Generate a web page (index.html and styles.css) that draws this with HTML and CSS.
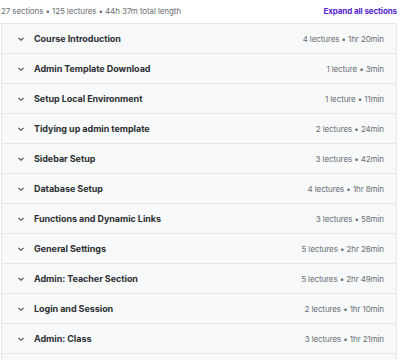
FILE: index.html
```html
<!DOCTYPE html>
<html>
<head>
<meta charset="utf-8">
<link rel="stylesheet" href="styles.css">
</head>
<body>
<div class="page">
  <div class="top">
    <span class="summary">27 sections • 125 lectures • 44h 37m total length</span>
    <span class="expand">Expand all sections</span>
  </div>
  <div class="list">
    <div class="row"><span class="chev"><svg width="8" height="6" viewBox="0 0 8 6"><path d="M1.5 1.8 L4 4.3 L6.5 1.8" fill="none" stroke="#3e4143" stroke-width="1.1"/></svg></span><span class="title">Course Introduction</span><span class="meta">4 lectures • 1hr 20min</span></div>
    <div class="row"><span class="chev"><svg width="8" height="6" viewBox="0 0 8 6"><path d="M1.5 1.8 L4 4.3 L6.5 1.8" fill="none" stroke="#3e4143" stroke-width="1.1"/></svg></span><span class="title">Admin Template Download</span><span class="meta">1 lecture • 3min</span></div>
    <div class="row"><span class="chev"><svg width="8" height="6" viewBox="0 0 8 6"><path d="M1.5 1.8 L4 4.3 L6.5 1.8" fill="none" stroke="#3e4143" stroke-width="1.1"/></svg></span><span class="title">Setup Local Environment</span><span class="meta">1 lecture • 11min</span></div>
    <div class="row"><span class="chev"><svg width="8" height="6" viewBox="0 0 8 6"><path d="M1.5 1.8 L4 4.3 L6.5 1.8" fill="none" stroke="#3e4143" stroke-width="1.1"/></svg></span><span class="title">Tidying up admin template</span><span class="meta">2 lectures • 24min</span></div>
    <div class="row"><span class="chev"><svg width="8" height="6" viewBox="0 0 8 6"><path d="M1.5 1.8 L4 4.3 L6.5 1.8" fill="none" stroke="#3e4143" stroke-width="1.1"/></svg></span><span class="title">Sidebar Setup</span><span class="meta">3 lectures • 42min</span></div>
    <div class="row"><span class="chev"><svg width="8" height="6" viewBox="0 0 8 6"><path d="M1.5 1.8 L4 4.3 L6.5 1.8" fill="none" stroke="#3e4143" stroke-width="1.1"/></svg></span><span class="title">Database Setup</span><span class="meta">4 lectures • 1hr 8min</span></div>
    <div class="row"><span class="chev"><svg width="8" height="6" viewBox="0 0 8 6"><path d="M1.5 1.8 L4 4.3 L6.5 1.8" fill="none" stroke="#3e4143" stroke-width="1.1"/></svg></span><span class="title">Functions and Dynamic Links</span><span class="meta">3 lectures • 58min</span></div>
    <div class="row"><span class="chev"><svg width="8" height="6" viewBox="0 0 8 6"><path d="M1.5 1.8 L4 4.3 L6.5 1.8" fill="none" stroke="#3e4143" stroke-width="1.1"/></svg></span><span class="title">General Settings</span><span class="meta">5 lectures • 2hr 26min</span></div>
    <div class="row"><span class="chev"><svg width="8" height="6" viewBox="0 0 8 6"><path d="M1.5 1.8 L4 4.3 L6.5 1.8" fill="none" stroke="#3e4143" stroke-width="1.1"/></svg></span><span class="title">Admin: Teacher Section</span><span class="meta">5 lectures • 2hr 49min</span></div>
    <div class="row"><span class="chev"><svg width="8" height="6" viewBox="0 0 8 6"><path d="M1.5 1.8 L4 4.3 L6.5 1.8" fill="none" stroke="#3e4143" stroke-width="1.1"/></svg></span><span class="title">Login and Session</span><span class="meta">2 lectures • 1hr 10min</span></div>
    <div class="row"><span class="chev"><svg width="8" height="6" viewBox="0 0 8 6"><path d="M1.5 1.8 L4 4.3 L6.5 1.8" fill="none" stroke="#3e4143" stroke-width="1.1"/></svg></span><span class="title">Admin: Class</span><span class="meta">3 lectures • 1hr 21min</span></div>
    <div class="row"></div>
  </div>
</div>
</body>
</html>
```

FILE: styles.css
```css
html, body {
  margin: 0;
  padding: 0;
  background: #ffffff;
}
body {
  font-family: Inter, "Liberation Sans", sans-serif;
  color: #2d2f31;
  overflow: hidden;
  height: 360px;
}
.page {
  padding: 0 3px 0 1px;
}
.top {
  display: flex;
  justify-content: space-between;
  align-items: center;
  height: 22px;
  padding-bottom: 1px;
}
.summary {
  font-size: 8px;
  color: #6a6f73;
  letter-spacing: -0.1px;
}
.expand {
  font-size: 8px;
  font-weight: 700;
  color: #5624d0;
  letter-spacing: -0.1px;
}
.list {
  border: 1px solid #e4e8eb;
  border-bottom: none;
}
.row {
  display: flex;
  align-items: center;
  height: 29px;
  background: #f7f9fa;
  border-bottom: 1px solid #e4e8eb;
  padding: 0 12px 0 15px;
}
.chev {
  display: flex;
  width: 17px;
}
.title {
  flex: 1;
  font-size: 9px;
  font-weight: 700;
  color: #2d2f31;
  letter-spacing: -0.05px;
}
.meta {
  font-size: 8px;
  color: #6a6f73;
  letter-spacing: -0.1px;
}
```
